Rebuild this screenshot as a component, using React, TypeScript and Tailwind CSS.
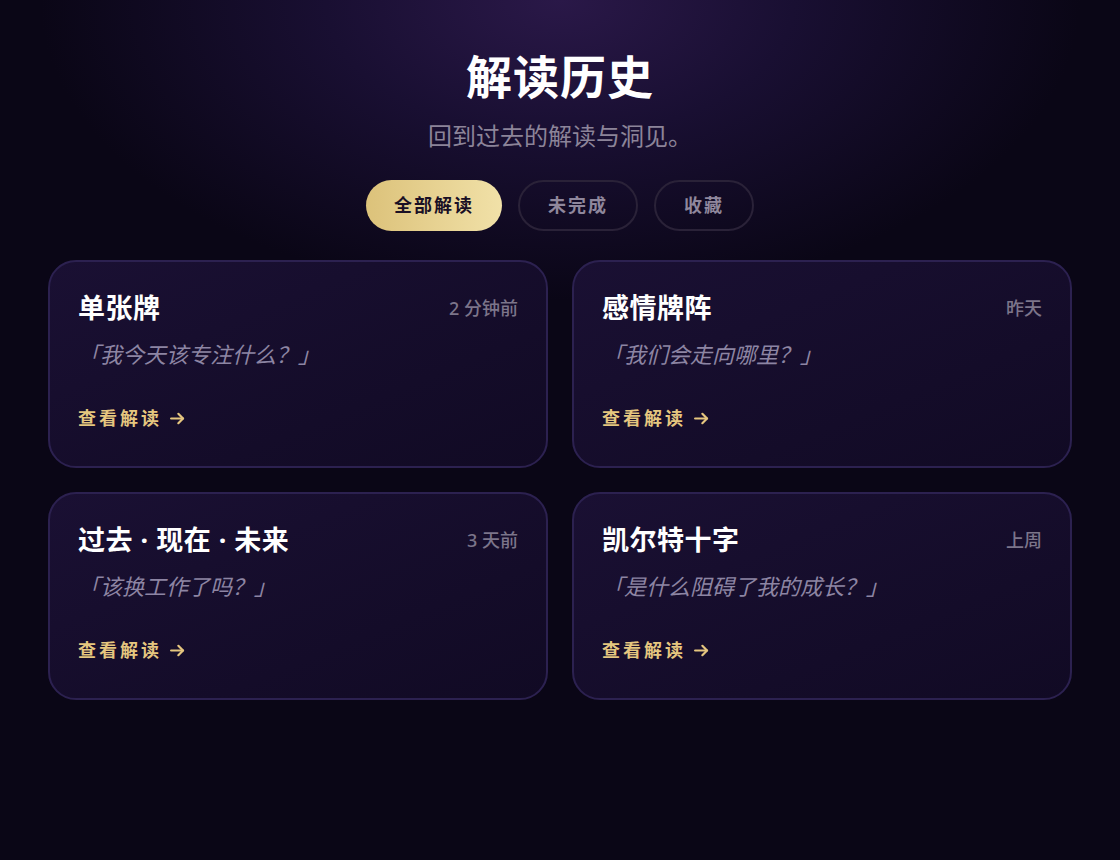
const readings = [
  { title: "单张牌", time: "2 分钟前", question: "「我今天该专注什么？」" },
  { title: "感情牌阵", time: "昨天", question: "「我们会走向哪里？」" },
  { title: "过去 · 现在 · 未来", time: "3 天前", question: "「该换工作了吗？」" },
  { title: "凯尔特十字", time: "上周", question: "「是什么阻碍了我的成长？」" },
];

const tabs = ["全部解读", "未完成", "收藏"];

function ArrowRight() {
  return (
    <svg width="17" height="17" viewBox="0 0 20 20" fill="none" stroke="currentColor" strokeWidth="2.6" strokeLinecap="round" strokeLinejoin="round">
      <path d="M2.5 10h14" />
      <path d="M11 4.5l5.5 5.5-5.5 5.5" />
    </svg>
  );
}

export default function App() {
  return (
    <div
      className="min-h-[860px] w-full bg-[#0a0616] bg-[radial-gradient(ellipse_520px_300px_at_50%_0%,#2a1848_0%,#190f32_45%,#0a0616_100%)] text-white"
      style={{ fontFamily: '"Noto Sans", "Noto Sans CJK SC", sans-serif' }}
    >
      <div className="mx-auto w-full max-w-[1120px] px-12 pt-[46px] pb-12">
        <h1 className="text-center text-[46px] font-bold leading-[60px] tracking-[1px]">解读历史</h1>
        <p className="mt-[14px] text-center text-[24px] leading-[32px] text-[#8c8499]">回到过去的解读与洞见。</p>

        <div className="mt-[28px] flex items-center justify-center gap-4">
          {tabs.map((t, i) => (
            <button
              key={t}
              className={
                i === 0
                  ? "h-[51px] rounded-full bg-gradient-to-r from-[#dcc27a] to-[#f1e1a8] px-7 text-[18px] font-bold tracking-[2px] text-[#1a1025]"
                  : "h-[51px] rounded-full border-2 border-[#2a2238] px-7 text-[18px] font-bold tracking-[2px] text-[#8f879c]"
              }
            >
              {t}
            </button>
          ))}
        </div>

        <div className="mt-[29px] grid grid-cols-2 gap-6">
          {readings.map((r) => (
            <div
              key={r.title}
              className="h-[208px] rounded-[28px] border-2 border-[#2c2150] bg-gradient-to-br from-[#1a1033] to-[#110a24] px-[28px] pt-[28px]"
            >
              <div className="flex items-center justify-between">
                <div className="text-[27px] font-bold leading-[36px] tracking-[0.5px] text-white">{r.title}</div>
                <div className="text-[18px] font-medium leading-[24px] text-[#7c758a]">{r.time}</div>
              </div>
              <div className="mt-[13px] text-[22px] italic leading-[30px] text-[#8d85a3]">{r.question}</div>
              <div className="mt-[37px] flex items-center gap-[7px] text-[18px] font-bold leading-[24px] tracking-[3px] text-[#e5c67f]">
                <span>查看解读</span>
                <ArrowRight />
              </div>
            </div>
          ))}
        </div>
      </div>
    </div>
  );
}
